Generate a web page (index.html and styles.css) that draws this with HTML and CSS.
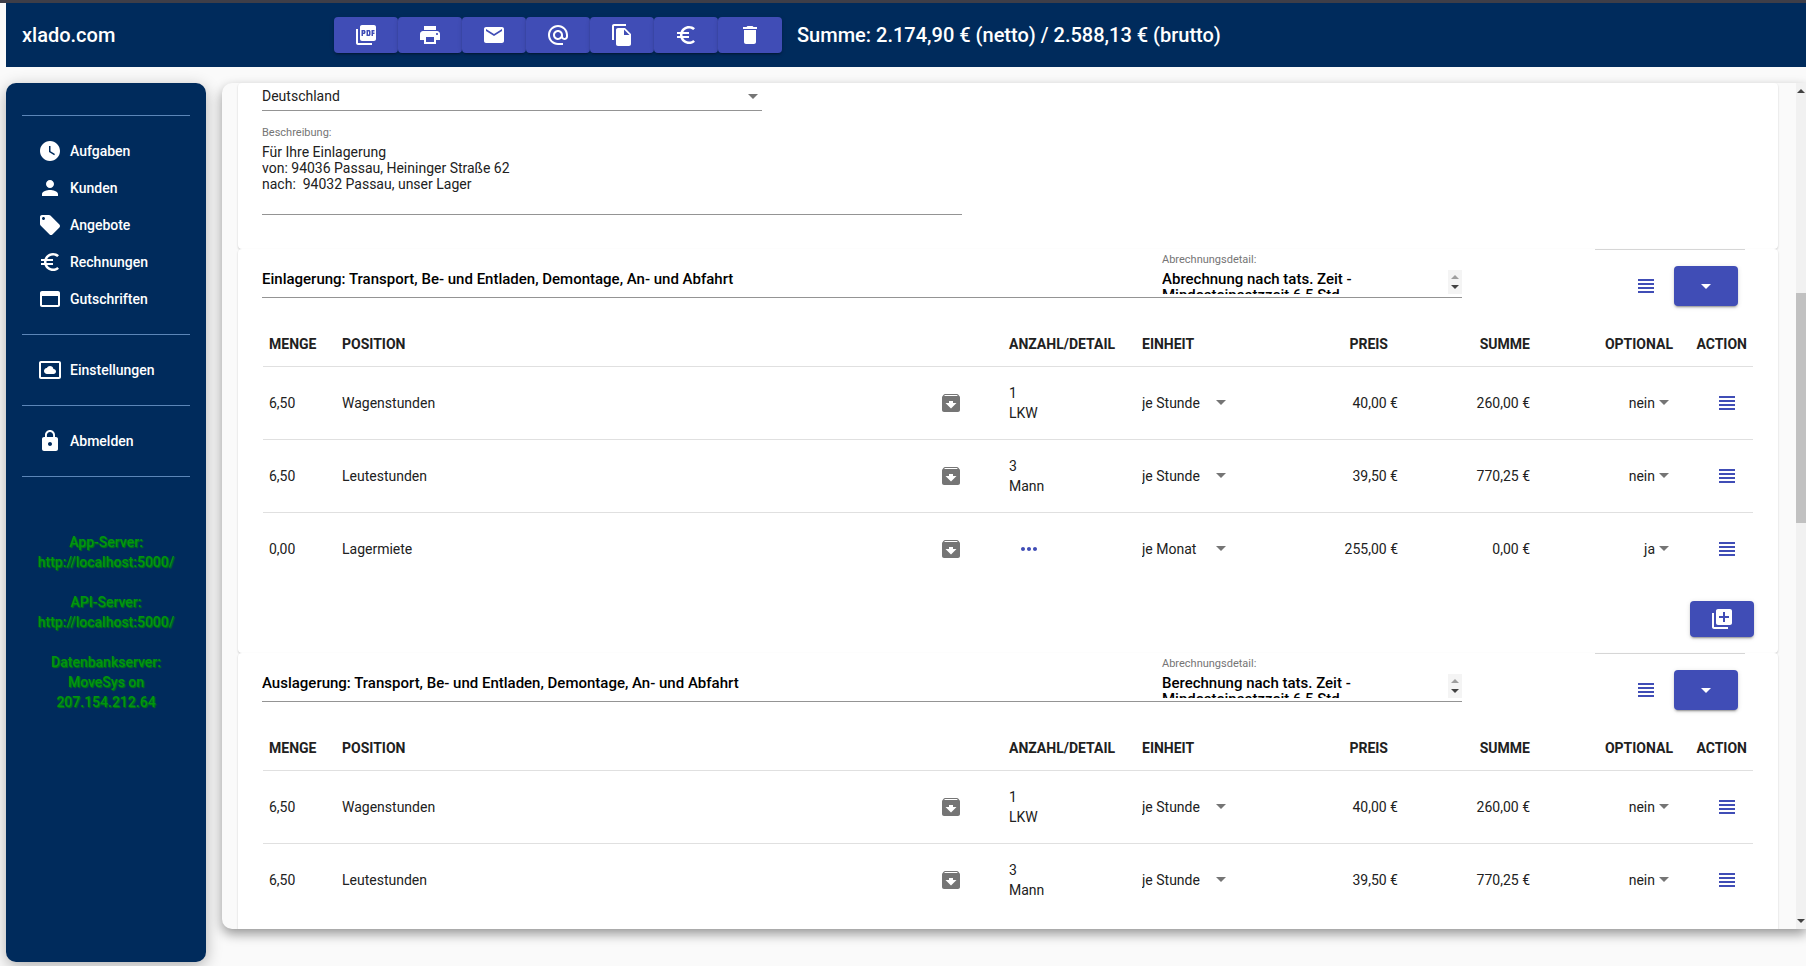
FILE: index.html
```
<!DOCTYPE html>
<html lang="de">
<head>
<meta charset="UTF-8">
<meta name="viewport" content="width=device-width, initial-scale=1">
<title>xlado.com</title>
<link rel="stylesheet" href="styles.css">
</head>
<body>

<!-- icons -->
<svg class="defs" width="0" height="0">
  <symbol id="i-pdf" viewBox="0 0 24 24"><path d="M20 2H8c-1.100 0-2 .9-2 2v12c0 1.100.9 2 2 2h12c1.100 0 2-.9 2-2V4c0-1.100-.9-2-2-2zm-8.500 7.500c0 .83-.67 1.500-1.500 1.500H9v2H7.500V7H10c.83 0 1.500.67 1.500 1.500v1zm5 2c0 .83-.67 1.500-1.500 1.500h-2.500V7H15c.83 0 1.500.67 1.500 1.500v3zm4-3H19v1h1.500V11H19v2h-1.500V7h3v1.500zM9 9.500h1v-1H9v1zM4 6H2v14c0 1.100.9 2 2 2h14v-2H4V6zm10 5.500h1v-3h-1v3z"/></symbol>
  <symbol id="i-print" viewBox="0 0 24 24"><path d="M19 8H5c-1.660 0-3 1.340-3 3v6h4v4h12v-4h4v-6c0-1.660-1.340-3-3-3zm-3 11H8v-5h8v5zm3-7c-.55 0-1-.45-1-1s.45-1 1-1 1 .45 1 1-.45 1-1 1zm-1-9H6v4h12V3z"/></symbol>
  <symbol id="i-mail" viewBox="0 0 24 24"><path d="M20 4H4c-1.100 0-1.990.9-1.990 2L2 18c0 1.100.9 2 2 2h16c1.100 0 2-.9 2-2V6c0-1.100-.9-2-2-2zm0 4l-8 5-8-5V6l8 5 8-5v2z"/></symbol>
  <symbol id="i-at" viewBox="0 0 24 24"><path d="M12 2C6.480 2 2 6.480 2 12s4.480 10 10 10h5v-2h-5c-4.340 0-8-3.660-8-8s3.660-8 8-8 8 3.660 8 8v1.430c0 .79-.71 1.570-1.500 1.570s-1.500-.78-1.500-1.570V12c0-2.760-2.240-5-5-5s-5 2.240-5 5 2.240 5 5 5c1.380 0 2.640-.56 3.540-1.470.65.89 1.770 1.470 2.960 1.470 1.970 0 3.500-1.600 3.500-3.570V12c0-5.520-4.480-10-10-10zm0 13c-1.660 0-3-1.340-3-3s1.340-3 3-3 3 1.340 3 3-1.340 3-3 3z"/></symbol>
  <symbol id="i-copy" viewBox="0 0 24 24"><path d="M16 1H4c-1.100 0-2 .9-2 2v14h2V3h12V1zm-1 4l6 6v10c0 1.100-.9 2-2 2H7.990C6.890 23 6 22.100 6 21l.01-14c0-1.100.89-2 1.990-2h7zm-1 7h5.500L14 6.500V12z"/></symbol>
  <symbol id="i-euro" viewBox="0 0 24 24"><path d="M15 18.500c-2.510 0-4.680-1.420-5.760-3.500H15v-2H8.580c-.05-.33-.08-.66-.08-1s.03-.67.08-1H15V9H9.240C10.320 6.920 12.500 5.500 15 5.500c1.610 0 3.090.59 4.230 1.570L21 5.300C19.410 3.870 17.300 3 15 3c-3.920 0-7.240 2.510-8.480 6H3v2h3.060c-.04.33-.06.66-.06 1s.02.67.06 1H3v2h3.520c1.240 3.490 4.560 6 8.480 6 2.310 0 4.410-.87 6-2.300l-1.780-1.770c-1.130.98-2.600 1.570-4.220 1.570z"/></symbol>
  <symbol id="i-delete" viewBox="0 0 24 24"><path d="M6 19c0 1.100.9 2 2 2h8c1.100 0 2-.9 2-2V7H6v12zM19 4h-3.500l-1-1h-5l-1 1H5v2h14V4z"/></symbol>
  <symbol id="i-clock" viewBox="0 0 24 24"><path d="M12 2C6.500 2 2 6.500 2 12s4.500 10 10 10 10-4.500 10-10S17.500 2 12 2zm4.200 14.200L11 13V7h1.500v5.200l4.500 2.700-.8 1.300z"/></symbol>
  <symbol id="i-person" viewBox="0 0 24 24"><path d="M12 12c2.210 0 4-1.790 4-4s-1.790-4-4-4-4 1.790-4 4 1.790 4 4 4zm0 2c-2.670 0-8 1.340-8 4v2h16v-2c0-2.660-5.330-4-8-4z"/></symbol>
  <symbol id="i-offer" viewBox="0 0 24 24"><path d="M21.410 11.580l-9-9C12.050 2.220 11.550 2 11 2H4c-1.100 0-2 .9-2 2v7c0 .55.22 1.050.59 1.420l9 9c.36.36.86.58 1.410.58s1.050-.22 1.410-.59l7-7c.37-.36.59-.86.59-1.410s-.23-1.060-.59-1.420zM5.500 7C4.670 7 4 6.330 4 5.500S4.670 4 5.500 4 7 4.670 7 5.500 6.330 7 5.500 7z"/></symbol>
  <symbol id="i-card" viewBox="0 0 24 24"><path d="M20 4H4c-1.110 0-1.990.89-1.990 2L2 18c0 1.110.89 2 2 2h16c1.110 0 2-.89 2-2V6c0-1.110-.89-2-2-2zm0 14H4V9h16v9z"/></symbol>
  <symbol id="i-settings" viewBox="0 0 24 24"><path d="M21 3H3c-1.100 0-2 .9-2 2v14c0 1.100.9 2 2 2h18c1.100 0 2-.9 2-2V5c0-1.100-.9-2-2-2zm0 16H3V5h18v14zM15.500 16c1.380 0 2.500-1.120 2.500-2.500S16.880 11 15.500 11h-.05c-.24-1.690-1.690-3-3.450-3-1.400 0-2.600.83-3.160 2.020h-.16C7.170 10.180 6 11.450 6 13c0 1.660 1.340 3 3 3h6.500z"/></symbol>
  <symbol id="i-lock" viewBox="0 0 24 24"><path d="M18 8h-1V6c0-2.760-2.240-5-5-5S7 3.240 7 6v2H6c-1.100 0-2 .9-2 2v10c0 1.100.9 2 2 2h12c1.100 0 2-.9 2-2V10c0-1.100-.9-2-2-2zm-6 9c-1.100 0-2-.9-2-2s.9-2 2-2 2 .9 2 2-.9 2-2 2zm3.100-9H8.900V6c0-1.710 1.390-3.100 3.100-3.100s3.100 1.390 3.100 3.100v2z"/></symbol>
  <symbol id="i-lines" viewBox="0 0 24 24"><path d="M4 15h16v-2H4v2zm0 4h16v-2H4v2zm0-8h16V9H4v2zm0-6v2h16V5H4z"/></symbol>
  <symbol id="i-archive" viewBox="0 0 24 24"><path d="M20.540 5.230l-1.390-1.680C18.880 3.210 18.470 3 18 3H6c-.47 0-.88.21-1.160.55L3.460 5.230C3.170 5.570 3 6.020 3 6.500V19c0 1.100.9 2 2 2h14c1.100 0 2-.9 2-2V6.500c0-.48-.17-.93-.46-1.270zM12 17.500L6.500 12H10v-2h4v2h3.500L12 17.500zM5.120 5l.81-1h12l.94 1H5.120z"/></symbol>
  <symbol id="i-more" viewBox="0 0 24 24"><path d="M6 10c-1.100 0-2 .9-2 2s.9 2 2 2 2-.9 2-2-.9-2-2-2zm12 0c-1.100 0-2 .9-2 2s.9 2 2 2 2-.9 2-2-.9-2-2-2zm-6 0c-1.100 0-2 .9-2 2s.9 2 2 2 2-.9 2-2-.9-2-2-2z"/></symbol>
  <symbol id="i-drop" viewBox="0 0 24 24"><path d="M7 10l5 5 5-5z"/></symbol>
  <symbol id="i-add" viewBox="0 0 24 24"><path d="M4 6H2v14c0 1.100.9 2 2 2h14v-2H4V6zm16-4H8c-1.100 0-2 .9-2 2v12c0 1.100.9 2 2 2h12c1.100 0 2-.9 2-2V4c0-1.100-.9-2-2-2zm-1 9h-4v4h-2v-4H9V9h4V5h2v4h4v2z"/></symbol>
</svg>

<header class="toolbar">
  <a class="brand" href="#">xlado.com</a>
  <div class="tools">
    <button class="btn" aria-label="PDF"><svg class="icon"><use href="#i-pdf"/></svg></button>
    <button class="btn" aria-label="Drucken"><svg class="icon"><use href="#i-print"/></svg></button>
    <button class="btn" aria-label="Post"><svg class="icon"><use href="#i-mail"/></svg></button>
    <button class="btn" aria-label="E-Mail"><svg class="icon"><use href="#i-at"/></svg></button>
    <button class="btn" aria-label="Kopieren"><svg class="icon"><use href="#i-copy"/></svg></button>
    <button class="btn" aria-label="Rechnung"><svg class="icon"><use href="#i-euro"/></svg></button>
    <button class="btn" aria-label="Löschen"><svg class="icon"><use href="#i-delete"/></svg></button>
  </div>
  <div class="total">Summe: 2.174,90 € (netto) / 2.588,13 € (brutto)</div>
</header>

<div class="page">
  <nav class="sidebar">
    <hr>
    <ul>
      <li><a href="#"><svg class="icon"><use href="#i-clock"/></svg>Aufgaben</a></li>
      <li><a href="#"><svg class="icon"><use href="#i-person"/></svg>Kunden</a></li>
      <li><a href="#"><svg class="icon"><use href="#i-offer"/></svg>Angebote</a></li>
      <li><a href="#"><svg class="icon"><use href="#i-euro"/></svg>Rechnungen</a></li>
      <li><a href="#"><svg class="icon"><use href="#i-card"/></svg>Gutschriften</a></li>
    </ul>
    <hr>
    <ul>
      <li><a href="#"><svg class="icon"><use href="#i-settings"/></svg>Einstellungen</a></li>
    </ul>
    <hr>
    <ul>
      <li><a href="#"><svg class="icon"><use href="#i-lock"/></svg>Abmelden</a></li>
    </ul>
    <hr>
    <div class="server">
      <p>App-Server:<br>http://localhost:5000/</p>
      <p>API-Server:<br>http://localhost:5000/</p>
      <p>Datenbankserver:<br>MoveSys on<br>207.154.212.64</p>
    </div>
  </nav>

  <main class="content">
    <div class="cards">
      <section class="card">
        <div class="select country">
          <select aria-label="Land"><option>Deutschland</option><option>Österreich</option></select>
        </div>
        <div class="description">
          <label for="description">Beschreibung:</label>
          <textarea id="description">Für Ihre Einlagerung
von: 94036 Passau, Heininger Straße 62
nach:  94032 Passau, unser Lager</textarea>
        </div>
      </section>

      <section class="card">
        <div class="card-head">
          <input class="title" aria-label="Titel" value="Einlagerung: Transport, Be- und Entladen, Demontage, An- und Abfahrt">
          <div class="detail">
            <label for="detail1">Abrechnungsdetail:</label>
            <textarea id="detail1">Abrechnung nach tats. Zeit -
Mindesteinsatzzeit 6,5 Std.</textarea>
            <span class="spin"></span>
          </div>
          <div class="actions">
            <button class="btn-icon" aria-label="Menü"><svg class="icon"><use href="#i-lines"/></svg></button>
            <button class="btn btn-tall" aria-label="Mehr"><svg class="icon"><use href="#i-drop"/></svg></button>
          </div>
        </div>
        <table>
          <colgroup><col class="c-qty"><col><col class="c-icon"><col class="c-detail"><col class="c-unit"><col class="c-price"><col class="c-sum"><col class="c-opt"><col class="c-action"></colgroup>
          <thead>
            <tr><th>MENGE</th><th colspan="2">POSITION</th><th>ANZAHL/DETAIL</th><th>EINHEIT</th><th class="num price">PREIS</th><th class="num">SUMME</th><th class="num">OPTIONAL</th><th class="num">ACTION</th></tr>
          </thead>
          <tbody>
            <tr>
              <td>6,50</td><td>Wagenstunden</td>
              <td><svg class="icon grey"><use href="#i-archive"/></svg></td>
              <td>1<br>LKW</td>
              <td><div class="select unit"><select aria-label="Einheit"><option>je Stunde</option><option>je Monat</option></select></div></td>
              <td class="num">40,00 €</td><td class="num">260,00 €</td>
              <td class="num opt"><div class="select"><select aria-label="Optional"><option>nein</option><option>ja</option></select></div></td>
              <td class="num action"><button class="btn-icon" aria-label="Menü"><svg class="icon"><use href="#i-lines"/></svg></button></td>
            </tr>
            <tr>
              <td>6,50</td><td>Leutestunden</td>
              <td><svg class="icon grey"><use href="#i-archive"/></svg></td>
              <td>3<br>Mann</td>
              <td><div class="select unit"><select aria-label="Einheit"><option>je Stunde</option><option>je Monat</option></select></div></td>
              <td class="num">39,50 €</td><td class="num">770,25 €</td>
              <td class="num opt"><div class="select"><select aria-label="Optional"><option>nein</option><option>ja</option></select></div></td>
              <td class="num action"><button class="btn-icon" aria-label="Menü"><svg class="icon"><use href="#i-lines"/></svg></button></td>
            </tr>
            <tr>
              <td>0,00</td><td>Lagermiete</td>
              <td><svg class="icon grey"><use href="#i-archive"/></svg></td>
              <td><button class="btn-icon more" aria-label="Detail"><svg class="icon"><use href="#i-more"/></svg></button></td>
              <td><div class="select unit"><select aria-label="Einheit"><option>je Monat</option><option>je Stunde</option></select></div></td>
              <td class="num">255,00 €</td><td class="num">0,00 €</td>
              <td class="num opt"><div class="select"><select aria-label="Optional"><option>ja</option><option>nein</option></select></div></td>
              <td class="num action"><button class="btn-icon" aria-label="Menü"><svg class="icon"><use href="#i-lines"/></svg></button></td>
            </tr>
          </tbody>
        </table>
        <div class="card-foot">
          <button class="btn" aria-label="Hinzufügen"><svg class="icon"><use href="#i-add"/></svg></button>
        </div>
      </section>

      <section class="card">
        <div class="card-head">
          <input class="title" aria-label="Titel" value="Auslagerung: Transport, Be- und Entladen, Demontage, An- und Abfahrt">
          <div class="detail">
            <label for="detail2">Abrechnungsdetail:</label>
            <textarea id="detail2">Berechnung nach tats. Zeit -
Mindesteinsatzzeit 6,5 Std.</textarea>
            <span class="spin"></span>
          </div>
          <div class="actions">
            <button class="btn-icon" aria-label="Menü"><svg class="icon"><use href="#i-lines"/></svg></button>
            <button class="btn btn-tall" aria-label="Mehr"><svg class="icon"><use href="#i-drop"/></svg></button>
          </div>
        </div>
        <table>
          <colgroup><col class="c-qty"><col><col class="c-icon"><col class="c-detail"><col class="c-unit"><col class="c-price"><col class="c-sum"><col class="c-opt"><col class="c-action"></colgroup>
          <thead>
            <tr><th>MENGE</th><th colspan="2">POSITION</th><th>ANZAHL/DETAIL</th><th>EINHEIT</th><th class="num price">PREIS</th><th class="num">SUMME</th><th class="num">OPTIONAL</th><th class="num">ACTION</th></tr>
          </thead>
          <tbody>
            <tr>
              <td>6,50</td><td>Wagenstunden</td>
              <td><svg class="icon grey"><use href="#i-archive"/></svg></td>
              <td>1<br>LKW</td>
              <td><div class="select unit"><select aria-label="Einheit"><option>je Stunde</option><option>je Monat</option></select></div></td>
              <td class="num">40,00 €</td><td class="num">260,00 €</td>
              <td class="num opt"><div class="select"><select aria-label="Optional"><option>nein</option><option>ja</option></select></div></td>
              <td class="num action"><button class="btn-icon" aria-label="Menü"><svg class="icon"><use href="#i-lines"/></svg></button></td>
            </tr>
            <tr>
              <td>6,50</td><td>Leutestunden</td>
              <td><svg class="icon grey"><use href="#i-archive"/></svg></td>
              <td>3<br>Mann</td>
              <td><div class="select unit"><select aria-label="Einheit"><option>je Stunde</option><option>je Monat</option></select></div></td>
              <td class="num">39,50 €</td><td class="num">770,25 €</td>
              <td class="num opt"><div class="select"><select aria-label="Optional"><option>nein</option><option>ja</option></select></div></td>
              <td class="num action"><button class="btn-icon" aria-label="Menü"><svg class="icon"><use href="#i-lines"/></svg></button></td>
            </tr>
          </tbody>
        </table>
      </section>
    </div>
    <div class="scrollbar"><div class="thumb"></div></div>
  </main>
</div>

</body>
</html>
```
FILE: styles.css
```
* {
  box-sizing: border-box;
}

body {
  display: flex;
  flex-direction: column;
  height: 100vh;
  margin: 0;
  overflow: hidden;
  border-top: 3px solid #3e3e48;
  background: #fafafa;
  color: #212121;
  font-family: Roboto, sans-serif;
  font-size: 14px;
  line-height: 20px;
}

input, select, textarea, button {
  margin: 0;
  padding: 0;
  border: 0;
  border-radius: 0;
  background: none;
  color: inherit;
  font: inherit;
  outline: 0;
}

ul {
  margin: 0;
  padding: 0;
  list-style: none;
}

.defs {
  position: absolute;
}

.icon {
  display: block;
  flex: none;
  width: 24px;
  height: 24px;
  fill: currentColor;
}

.grey {
  color: #757575;
}

/* toolbar */
.toolbar {
  display: flex;
  flex: none;
  align-items: center;
  height: 64px;
  margin-left: 6px;
  padding: 0 16px;
  background: #002b5c;
  color: #fff;
  font-size: 20px;
  font-weight: 500;
}

.brand {
  width: 312px;
  color: inherit;
  text-decoration: none;
}

.tools {
  display: flex;
  margin-right: 15px;
}

.btn {
  display: flex;
  align-items: center;
  justify-content: center;
  width: 64px;
  height: 36px;
  border-radius: 4px;
  background: #404db6;
  color: #fff;
  box-shadow: 0 3px 1px -2px rgba(0, 0, 0, .2), 0 2px 2px rgba(0, 0, 0, .14), 0 1px 5px rgba(0, 0, 0, .12);
}

.btn-tall {
  height: 40px;
}

.btn-icon {
  display: inline-block;
  color: #404db6;
  vertical-align: middle;
}

/* sidebar */
.page {
  display: flex;
  flex: 1;
  min-height: 0;
  padding: 16px 0 4px 6px;
}

.sidebar {
  flex: none;
  width: 200px;
  margin-right: 16px;
  padding: 15px 16px;
  border-radius: 10px;
  background: #002b5c;
  color: #fff;
  font-weight: 500;
  box-shadow: 0 4px 16px rgba(0, 0, 0, .3);
}

.sidebar hr {
  height: 1px;
  margin: 17px 0 16px;
  border: 0;
  background: #5c86b8;
}

.sidebar a {
  display: flex;
  align-items: center;
  gap: 8px;
  height: 37px;
  padding-left: 16px;
  color: inherit;
  text-decoration: none;
}

.server {
  margin-top: 55px;
  color: #00960f;
  text-align: center;
  text-shadow: 1px 1px 1px #00800a;
}

.server p {
  margin: 0 0 20px;
}

/* content */
.content {
  display: flex;
  flex: 1;
  min-width: 0;
  margin-bottom: 33px;
  overflow: hidden;
  border-radius: 10px 0 0 10px;
  background: #fafafa;
  box-shadow: 0 5px 12px rgba(0, 0, 0, .4);
}

.cards {
  flex: 1;
  min-width: 0;
  padding: 0 18px 0 16px;
}

.card {
  padding: 0 24px;
  border-radius: 4px;
  background: #fff;
  box-shadow: 0 1px 2px rgba(0, 0, 0, .2);
}

.card:first-child {
  height: 166px;
}

.card:last-child {
  height: 300px;
}

.select {
  position: relative;
}

.select select {
  width: 100%;
  appearance: none;
}

.select::after {
  content: "";
  position: absolute;
  top: 50%;
  right: 4px;
  margin-top: -3px;
  border: 5px solid transparent;
  border-top-color: #757575;
  border-bottom: 0;
  pointer-events: none;
}

.country {
  width: 500px;
  padding: 3px 0 4px;
  border-bottom: 1px solid #949494;
}

.description {
  width: 700px;
  margin-top: 16px;
}

label {
  display: block;
  color: #757575;
  font-size: 11px;
  line-height: 12px;
}

textarea {
  display: block;
  width: 100%;
  overflow: hidden;
  line-height: 16px;
  resize: none;
}

.description textarea {
  height: 76px;
  padding-top: 5px;
  border-bottom: 1px solid #949494;
}

.card-head {
  display: flex;
  height: 49px;
  color: #000;
  font-size: 15px;
  font-weight: 500;
  text-shadow: 0 0 1px rgba(0, 0, 0, .6);
}

.title {
  flex: 3;
  min-width: 0;
  padding-top: 12px;
  border-bottom: 1px solid #949494;
}

.detail {
  position: relative;
  flex: 1;
  min-width: 0;
  padding-top: 5px;
  border-bottom: 1px solid #949494;
}

.detail label {
  font-weight: 400;
  text-shadow: none;
}

.detail textarea {
  height: 23px;
  margin-top: 5px;
}

.spin {
  position: absolute;
  right: 0;
  bottom: 3px;
  display: flex;
  flex-direction: column;
  align-items: center;
  justify-content: space-between;
  width: 14px;
  height: 24px;
  padding: 5px 0;
  background: #f4f4f4;
}

.spin::before, .spin::after {
  content: "";
  border: 4px solid transparent;
}

.spin::before {
  border-top: 0;
  border-bottom-color: #9e9e9e;
}

.spin::after {
  border-bottom: 0;
  border-top-color: #424242;
}

.actions {
  display: flex;
  flex: none;
  align-items: center;
  justify-content: flex-end;
  gap: 16px;
  width: 150px;
  height: 73px;
  margin: 0 9px 0 133px;
  padding-right: 7px;
  border-top: 1px solid #d6d6d6;
}

/* positions */
table {
  width: calc(100% - 2px);
  margin: 22px 0 0 1px;
  border-collapse: separate;
  border-spacing: 0;
  table-layout: fixed;
}

.c-qty { width: 73px; }
.c-icon { width: 70px; }
.c-detail { width: 133px; }
.c-unit { width: 120px; }
.c-price { width: 148px; }
.c-sum { width: 132px; }
.c-opt { width: 143px; }
.c-action { width: 74px; }

th, td {
  padding: 0 6px;
  border-bottom: 1px solid #e0e0e0;
  text-align: left;
}

th {
  height: 47px;
  padding-top: 2px;
  font-weight: 700;
}

td {
  height: 73px;
}

tbody tr:last-child td {
  height: 72px;
  border-bottom: 0;
}

.num {
  text-align: right;
}

th.price {
  padding-right: 16px;
}

.unit {
  width: 90px;
}

.unit::after {
  right: 6px;
}

.opt .select {
  width: 60px;
  margin-left: auto;
}

.opt select {
  padding-right: 18px;
  text-align-last: right;
}

td.action {
  padding-right: 14px;
}

.more {
  margin-left: 8px;
}

.card-foot {
  display: flex;
  justify-content: flex-end;
  padding: 16px 0;
}

/* scrollbar */
.scrollbar {
  display: flex;
  flex: none;
  flex-direction: column;
  align-items: center;
  justify-content: space-between;
  width: 10px;
  padding: 6px 0;
  background: #f1f1f1;
}

.scrollbar::before, .scrollbar::after {
  content: "";
  border: 4px solid transparent;
}

.scrollbar::before {
  border-top: 0;
  border-bottom-color: #424242;
}

.scrollbar::after {
  border-bottom: 0;
  border-top-color: #424242;
}

.thumb {
  width: 10px;
  height: 230px;
  margin-bottom: 196px;
  background: #c1c1c1;
}
```
